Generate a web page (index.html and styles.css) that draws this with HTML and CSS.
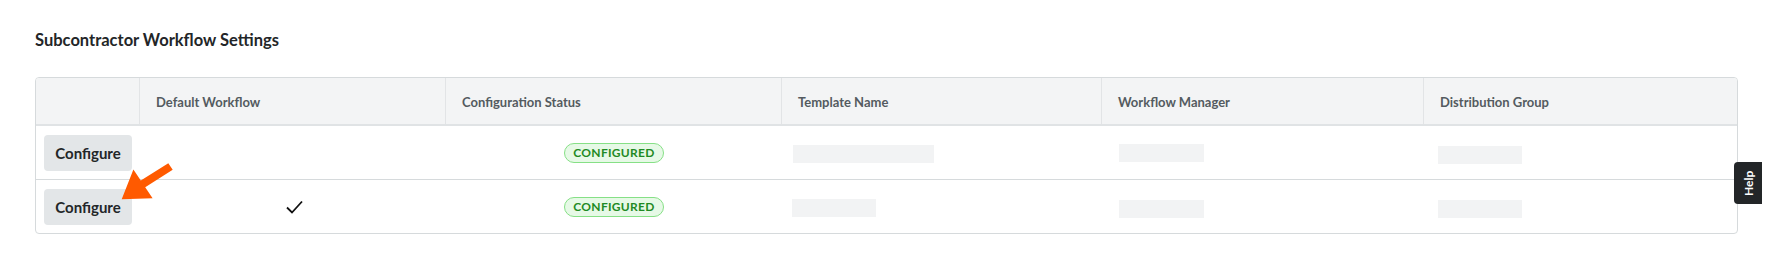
FILE: index.html
```html
<!DOCTYPE html>
<html lang="en">
<head>
  <meta charset="UTF-8" />
  <meta name="viewport" content="width=device-width, initial-scale=1.0"/>
  <title>Subcontractor Workflow Settings</title>
  <link rel="stylesheet" href="styles.css">
</head>
<body>

<div class="page">
  <h2 class="title">Subcontractor Workflow Settings</h2>

  <div class="table">
    <!-- header -->
    <div class="row head">
      <div class="cell"></div>
      <div class="cell">Default Workflow</div>
      <div class="cell">Configuration Status</div>
      <div class="cell">Template Name</div>
      <div class="cell">Workflow Manager</div>
      <div class="cell">Distribution Group</div>
    </div>

    <div class="row">
      <div class="cell btn-cell"><button class="btn">Configure</button></div>
      <div class="cell center"></div>
      <div class="cell center"><span class="badge">Configured</span></div>
      <div class="cell"><span class="blank tpl wide"></span></div>
      <div class="cell"><span class="blank mgr"></span></div>
      <div class="cell"><span class="blank grp"></span></div>
    </div>

    <div class="row last">
      <div class="cell btn-cell"><button class="btn">Configure</button></div>
      <div class="cell center">
        <svg class="check" width="17" height="14" viewBox="0 0 17 14">
          <polyline points="1,7.5 6,12.5 16,1.5" fill="none" stroke="#111" stroke-width="1.8"/>
        </svg>
      </div>
      <div class="cell center"><span class="badge">Configured</span></div>
      <div class="cell"><span class="blank tpl"></span></div>
      <div class="cell"><span class="blank mgr low"></span></div>
      <div class="cell"><span class="blank grp low"></span></div>
    </div>
  </div>

  <!-- annotation arrow -->
  <svg class="arrow" width="58" height="43" viewBox="118 160 58 43">
    <polygon fill="#ff5a00" points="168.3,163.2 172.7,169.8 145.2,187.2 152.6,198.2 121.7,199.3 133.4,169.6 140.8,180.6"/>
  </svg>

  <div class="help">Help</div>
</div>

</body>
</html>
```

FILE: styles.css
```css
* {
  margin: 0;
  padding: 0;
  box-sizing: border-box;
  font-family: Lato, 'Liberation Sans', sans-serif;
}

body {
  background: #fff;
  color: #232628;
}

.page {
  position: relative;
  width: 1775px;
  height: 259px;
  padding: 30px 37px 0 35px;
  overflow: hidden;
}

.title {
  font-size: 16.5px;
  line-height: 20px;
  font-weight: bold;
  color: #232628;
}

.table {
  margin-top: 27px;
  border: 1px solid #d6dadc;
  border-radius: 4px;
  overflow: hidden;
}

.row {
  display: grid;
  grid-template-columns: 104px 306px 336px 320px 322px 1fr;
  height: 54px;
  border-bottom: 1px solid #d6dadc;
}

.row.last {
  height: 53px;
  border-bottom: none;
}

.row.head {
  height: 48px;
  background: #f3f4f5;
  border-bottom: 2px solid #e0e3e5;
}

.cell {
  display: flex;
  align-items: center;
  padding-left: 16px;
}

.head .cell {
  font-size: 13px;
  font-weight: bold;
  color: #545b60;
  border-right: 1px solid #e2e4e6;
  padding-top: 1px;
}

.head .cell:last-child {
  border-right: none;
}

.cell.center {
  justify-content: center;
  padding-left: 0;
}

.btn-cell {
  padding-left: 8px;
}

.btn {
  height: 36px;
  width: 88px;
  padding: 0;
  border: none;
  border-radius: 4px;
  background: #e3e6e8;
  color: #232628;
  font-size: 15px;
  font-weight: bold;
  cursor: pointer;
}

.badge {
  display: inline-block;
  height: 20px;
  line-height: 18px;
  padding: 0 8px;
  border: 1px solid #86e086;
  border-radius: 10px;
  background: #e6f9e6;
  color: #1f8a24;
  font-size: 12px;
  font-weight: bold;
  letter-spacing: 0.3px;
  text-transform: uppercase;
}

.check {
  display: block;
  margin-left: 2px;
}

.blank {
  display: block;
  height: 18px;
  margin-top: 2px;
  background: #f2f3f4;
}

.blank.low {
  margin-top: 4px;
}

.tpl {
  width: 84px;
  margin-left: -6px;
}

.tpl.wide {
  width: 141px;
  margin-left: -5px;
}

.mgr {
  width: 85px;
  margin-left: 1px;
  margin-top: 0;
}

.grp {
  width: 84px;
  margin-left: -2px;
  margin-top: 4px;
}

.arrow {
  position: absolute;
  left: 118px;
  top: 160px;
}

.help {
  position: absolute;
  top: 162px;
  right: 13px;
  width: 28px;
  height: 42px;
  background: #232628;
  color: #fff;
  font-size: 12px;
  font-weight: bold;
  display: flex;
  align-items: center;
  justify-content: center;
  writing-mode: vertical-rl;
  transform: rotate(180deg);
  border-radius: 0 4px 4px 0;
}
```
